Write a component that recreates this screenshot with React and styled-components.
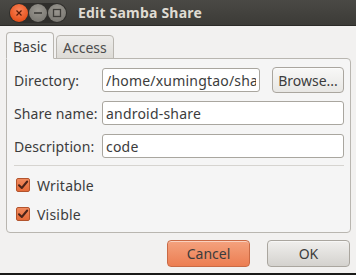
import React from 'react';
import styled, { createGlobalStyle } from 'styled-components';

const Global = createGlobalStyle`
  html, body { margin: 0; padding: 0; background: #f2f1f0; }
  body { font-family: "Noto Sans", "DejaVu Sans", sans-serif; }
`;

const Window = styled.div`
  width: 356px;
  height: 275px;
  box-sizing: border-box;
  display: flex;
  flex-direction: column;
  background: #f2f1f0;
  border-bottom: 2px solid #1a1a18;
  overflow: hidden;
  font-size: 13px;
  color: #3c3c3c;
`;

const TitleBar = styled.div`
  height: 26px;
  flex: none;
  display: flex;
  align-items: center;
  background: linear-gradient(#4a4945, #3c3b37);
  border-bottom: 1px solid #2c2b28;
  box-sizing: border-box;
`;

const Controls = styled.div`
  display: flex;
  align-items: center;
  margin-left: 9px;
  padding: 1px;
  border-radius: 10px;
  background: #2f2e2b;
`;

const Ctl = styled.div`
  width: 18px;
  height: 18px;
  border-radius: 50%;
  display: flex;
  align-items: center;
  justify-content: center;
  background: ${p => (p.$close
    ? 'radial-gradient(circle at 50% 35%, #f7845a, #e8541f 70%, #c9461a)'
    : 'radial-gradient(circle at 50% 35%, #9b9891, #7d7b75 70%, #6a6862)')};
  & + & { margin-left: 1px; }
`;

const Title = styled.div`
  margin-left: 11px;
  font-weight: bold;
  font-size: 14px;
  letter-spacing: 0.2px;
  color: #dfdbd2;
`;

const Body = styled.div`
  flex: 1;
  display: flex;
  flex-direction: column;
  padding: 6px 5px 0 6px;
`;

const Tabs = styled.div`
  display: flex;
  align-items: flex-end;
  height: 27px;
  position: relative;
  z-index: 1;
  margin-bottom: -1px;
`;

const Tab = styled.div`
  box-sizing: border-box;
  height: ${p => (p.$active ? '27px' : '24px')};
  padding: ${p => (p.$active ? '2px 6px 0' : '0 6px')};
  margin-right: 2px;
  display: flex;
  align-items: center;
  border: 1px solid #b9b6b0;
  border-bottom: 1px solid ${p => (p.$active ? '#f5f5f5' : '#b9b6b0')};
  border-radius: 4px 4px 0 0;
  background: ${p => (p.$active ? '#f5f5f5' : 'linear-gradient(#eeedeb, #dddbd6)')};
  color: ${p => (p.$active ? '#3c3c3c' : '#4c4c4c')};
  font-size: 14px;
`;

const Panel = styled.div`
  height: 175px;
  box-sizing: border-box;
  border: 1px solid #b9b6b0;
  border-radius: 0 4px 4px 4px;
  background: #f5f5f5;
  padding: 8px 6px 0 7px;
  display: flex;
  flex-direction: column;
`;

const Form = styled.div`
  display: grid;
  grid-template-columns: 88px 1fr auto;
  grid-auto-rows: 26px;
  row-gap: 7px;
  align-items: center;
`;

const Label = styled.label`
  font-size: 14px;
  letter-spacing: 0.1px;
  color: #3c3c3c;
`;

const Input = styled.input`
  grid-column: ${p => (p.$wide ? '2 / 4' : 'auto')};
  height: 24px;
  box-sizing: border-box;
  min-width: 0;
  border: 1px solid #a9a69f;
  border-radius: 3px;
  background: #fff;
  padding: 0 3px;
  font-family: inherit;
  font-size: 14px;
  letter-spacing: 0.2px;
  color: #3c3c3c;
  outline: none;
`;

const Button = styled.button`
  box-sizing: border-box;
  height: ${p => p.$h || 26}px;
  width: ${p => p.$w}px;
  margin-left: ${p => p.$ml || 0}px;
  margin-right: ${p => p.$mr || 0}px;
  border-radius: 4px;
  font-family: inherit;
  font-size: 14px;
  color: #3c3c3c;
  padding: 0;
  border: 1px solid ${p => (p.$accent ? '#c96a45' : '#aaa69f')};
  background: ${p => {
    if (p.$accent) return 'linear-gradient(#f4a27e, #ec7e52)';
    if (p.$flat) return 'linear-gradient(#f8f8f7, #e8e7e4)';
    return 'linear-gradient(#f0efed, #d4d2ce)';
  }};
  box-shadow: inset 0 1px 0 rgba(255,255,255,0.5);
`;

const Separator = styled.div`
  height: 1px;
  background: #d6d4d0;
  margin-top: 6px;
`;

const Checks = styled.div`
  display: flex;
  flex-direction: column;
  gap: 13px;
  padding: 11px 0 0 2px;
`;

const CheckRow = styled.div`
  display: flex;
  align-items: center;
  height: 16px;
  font-size: 14px;
  letter-spacing: 0.2px;
  color: #3c3c3c;
`;

const Box = styled.span`
  width: 14px;
  height: 14px;
  box-sizing: border-box;
  border: 1px solid #b2542d;
  border-radius: 2px;
  background: linear-gradient(#f08a5e, #e46a38);
  display: flex;
  align-items: center;
  justify-content: center;
  margin-right: 7px;
`;

const Actions = styled.div`
  display: flex;
  justify-content: flex-end;
  gap: 17px;
  padding-top: 7px;
`;

const Check = ({ children }) => (
  <CheckRow>
    <Box>
      <svg width="12" height="12" viewBox="0 0 12 12">
        <path d="M2 6.2 L4.8 9 L10.2 2.5" fill="none" stroke="#4a2318" strokeWidth="2" strokeLinecap="round" strokeLinejoin="round" />
      </svg>
    </Box>
    {children}
  </CheckRow>
);

export default function App() {
  return (
    <Window>
      <Global />
      <TitleBar>
        <Controls>
          <Ctl $close>
            <svg width="8" height="8" viewBox="0 0 8 8">
              <path d="M1.5 1.5 L6.5 6.5 M6.5 1.5 L1.5 6.5" stroke="#5a1c08" strokeWidth="1.2" />
            </svg>
          </Ctl>
          <Ctl>
            <svg width="10" height="10" viewBox="0 0 10 10">
              <path d="M1 5 H9" stroke="#3c3b37" strokeWidth="1.6" />
            </svg>
          </Ctl>
          <Ctl>
            <svg width="10" height="10" viewBox="0 0 10 10">
              <rect x="1.5" y="1.5" width="7" height="7" fill="none" stroke="#3c3b37" strokeWidth="1.3" />
            </svg>
          </Ctl>
        </Controls>
        <Title>Edit Samba Share</Title>
      </TitleBar>
      <Body>
        <Tabs>
          <Tab $active>Basic</Tab>
          <Tab>Access</Tab>
        </Tabs>
        <Panel>
          <Form>
            <Label>Directory:</Label>
            <Input defaultValue="/home/xumingtao/share" readOnly />
            <Button $flat $w={72} $ml={12}>Browse...</Button>
            <Label>Share name:</Label>
            <Input $wide defaultValue="android-share" readOnly />
            <Label>Description:</Label>
            <Input $wide defaultValue="code" readOnly />
          </Form>
          <Separator />
          <Checks>
            <Check>Writable</Check>
            <Check>Visible</Check>
          </Checks>
        </Panel>
        <Actions>
          <Button $accent $w={83} $h={27}>Cancel</Button>
          <Button $w={83} $h={27} $mr={1}>OK</Button>
        </Actions>
      </Body>
    </Window>
  );
}
